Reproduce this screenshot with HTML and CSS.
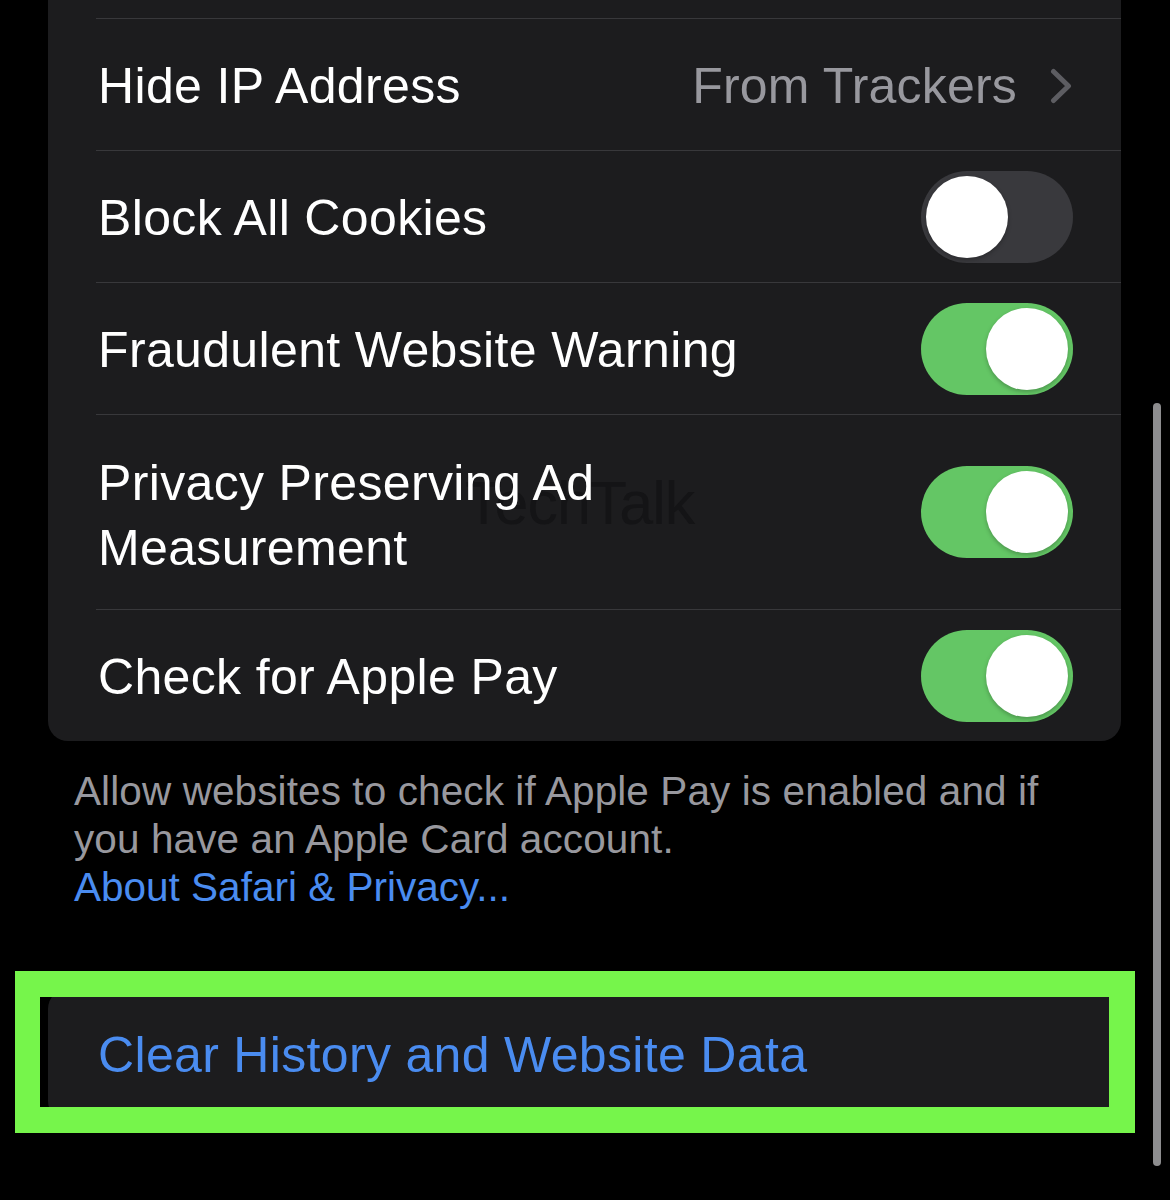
FILE: index.html
```html
<!DOCTYPE html>
<html lang="en">
<head>
<meta charset="utf-8">
<title>Safari Privacy Settings</title>
<link rel="stylesheet" href="styles.css">
</head>
<body>
<div class="page">
  <div class="card card-top">
    <div class="watermark">TechTalk</div>
    <div class="row">
      <span class="label">Hide IP Address</span>
      <span class="detail">
        <span class="value">From Trackers</span>
        <svg class="chevron" width="22" height="36" viewBox="0 0 22 36"><path d="M3.5 3.5 L18.5 18 L3.5 32.5" fill="none" stroke="#5d5d62" stroke-width="5" stroke-linecap="round" stroke-linejoin="round"/></svg>
      </span>
    </div>
    <div class="row">
      <span class="label">Block All Cookies</span>
      <span class="toggle off"><span class="knob"></span></span>
    </div>
    <div class="row">
      <span class="label">Fraudulent Website Warning</span>
      <span class="toggle on"><span class="knob"></span></span>
    </div>
    <div class="row row-tall">
      <span class="label label-wrap">Privacy Preserving Ad Measurement</span>
      <span class="toggle on"><span class="knob"></span></span>
    </div>
    <div class="row">
      <span class="label">Check for Apple Pay</span>
      <span class="toggle on"><span class="knob"></span></span>
    </div>
  </div>

  <div class="footer">
    <p class="footer-text">Allow websites to check if Apple Pay is enabled and if you have an Apple Card account.</p>
    <a class="footer-link">About Safari &amp; Privacy...</a>
  </div>

  <div class="card card-action">
    <div class="action-row">
      <span class="action">Clear History and Website Data</span>
    </div>
  </div>

  <div class="highlight"></div>
  <div class="scrollbar"></div>
</div>
</body>
</html>
```

FILE: styles.css
```css
html, body {
  margin: 0;
  padding: 0;
  background: #000;
}

body {
  font-family: "Liberation Sans", Arial, sans-serif;
  color: #fff;
  width: 1170px;
  height: 1200px;
  overflow: hidden;
}

.page {
  position: relative;
  width: 1170px;
  height: 1200px;
}

.card {
  margin-left: 48px;
  width: 1073px;
  background: #1c1c1e;
  box-sizing: border-box;
}

.card-top {
  position: relative;
  padding-top: 18px;
  border-radius: 0 0 20px 20px;
}

.watermark {
  position: absolute;
  left: 417px;
  top: 473px;
  font-size: 61px;
  line-height: 1;
  color: #141416;
  z-index: 0;
  letter-spacing: -1px;
}

.row {
  position: relative;
  z-index: 1;
  margin-left: 48px;
  padding-right: 48px;
  padding-top: 3px;
  height: 132px;
  box-sizing: border-box;
  border-top: 1px solid #38383b;
  display: flex;
  align-items: center;
  justify-content: space-between;
}

.row-tall {
  height: 195px;
  padding-top: 8px;
}

.toggle-row-fix {
  display: none;
}

.label {
  font-size: 50px;
  line-height: 65px;
  letter-spacing: 0.35px;
  color: #fff;
  padding-left: 2px;
}

.label-wrap {
  max-width: 700px;
}

.detail {
  display: flex;
  align-items: center;
  gap: 33px;
}

.value {
  font-size: 50px;
  letter-spacing: 0.2px;
  color: #98989e;
}

.chevron {
  display: block;
  margin-right: 1px;
}

.toggle {
  position: relative;
  flex: none;
  width: 152px;
  height: 92px;
  border-radius: 46px;
  box-sizing: border-box;
  padding: 5px;
  display: flex;
  margin-top: -3px;
}

.row-tall .toggle {
  margin-top: -8px;
}

.toggle.off {
  background: #39393d;
  justify-content: flex-start;
}

.toggle.on {
  background: #64c665;
  justify-content: flex-end;
}

.knob {
  width: 82px;
  height: 82px;
  border-radius: 50%;
  background: #fff;
  box-shadow: 0 2px 4px rgba(0, 0, 0, 0.25);
}

.footer {
  padding: 26px 0 0 74px;
  width: 1000px;
}

.footer-text {
  margin: 0;
  font-size: 40.5px;
  line-height: 48px;
  letter-spacing: 0.1px;
  color: #98989e;
}

.footer-link {
  display: block;
  font-size: 40.5px;
  line-height: 48px;
  color: #4a8cf0;
}

.card-action {
  margin-top: 78px;
  border-radius: 20px;
}

.action-row {
  height: 132px;
  display: flex;
  align-items: center;
  padding-left: 50px;
}

.action {
  font-size: 50px;
  letter-spacing: 0.33px;
  color: #4a8cf0;
}

.highlight {
  position: absolute;
  left: 15px;
  top: 971px;
  width: 1120px;
  height: 162px;
  box-sizing: border-box;
  border: 26px solid #76f54b;
  border-left-width: 25px;
}

.scrollbar {
  position: absolute;
  left: 1153px;
  top: 403px;
  width: 8px;
  height: 763px;
  border-radius: 4px;
  background: #8d8d8f;
}
```
